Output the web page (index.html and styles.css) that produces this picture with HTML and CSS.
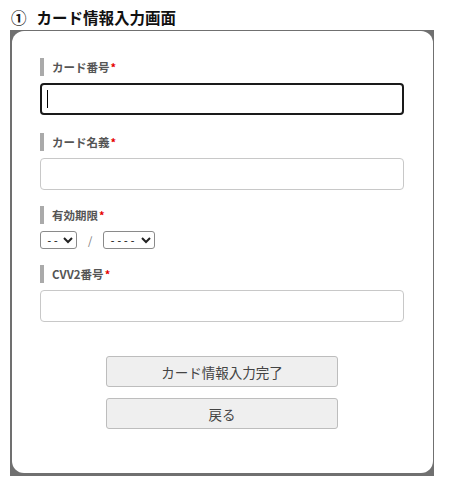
FILE: index.html
```html
<!DOCTYPE html>
<html lang="ja">
<head>
<meta charset="utf-8">
<title>カード情報入力画面</title>
<link rel="stylesheet" href="styles.css">
</head>
<body>
<div class="page">
  <h1 class="title"><span class="num">①</span>カード情報入力画面</h1>
  <div class="card-frame">
    <div class="card">
      <div class="fields">
        <div class="field field-first">
          <div class="label">カード番号<span class="req">*</span></div>
          <div class="textbox is-focused"><span class="caret"></span></div>
        </div>
        <div class="field">
          <div class="label">カード名義<span class="req">*</span></div>
          <input class="textbox" type="text">
        </div>
        <div class="field">
          <div class="label">有効期限<span class="req">*</span></div>
          <div class="expiry">
            <select class="sel sel-month"><option>--</option></select>
            <span class="slash">/</span>
            <select class="sel sel-year"><option>----</option></select>
          </div>
        </div>
        <div class="field">
          <div class="label">CVV2番号<span class="req">*</span></div>
          <input class="textbox" type="text">
        </div>
      </div>
      <div class="actions">
        <button class="btn" type="button">カード情報入力完了</button>
        <button class="btn" type="button">戻る</button>
      </div>
    </div>
  </div>
</div>
</body>
</html>
```
FILE: styles.css
```css
* { box-sizing: border-box; }
html, body { margin: 0; padding: 0; background: #fff; }
body {
  font-family: "Noto Sans CJK JP", "Noto Sans", sans-serif;
  color: #333;
}
.page {
  padding: 7px 0 0 10px;
  width: 434px;
}
.title {
  margin: 0 0 3px 1px;
  font-size: 15.5px;
  line-height: 20px;
  font-weight: bold;
  color: #111;
  display: flex;
  align-items: center;
}
.num {
  margin-right: 10px;
}
.card-frame {
  width: 424px;
  background: #707070;
  padding: 1px 1px 3px 2px;
}
.card {
  background: #fff;
  border-radius: 12px;
  padding: 27px 29px 44px 28px;
  display: flex;
  flex-direction: column;
}
.fields {
  display: flex;
  flex-direction: column;
  gap: 16px;
}
.field {
  display: flex;
  flex-direction: column;
  gap: 7px;
}
.field-first {
  margin-bottom: 2px;
}
.label {
  height: 18px;
  line-height: 18px;
  border-left: 4px solid #aaa;
  padding-left: 8px;
  font-size: 11.5px;
  font-weight: bold;
  color: #555;
}
.req {
  color: #e60000;
  font-size: 11px;
  margin-left: 1px;
}
.textbox {
  display: flex;
  align-items: center;
  width: 364px;
  height: 32px;
  border: 1px solid #c8c8c8;
  border-radius: 4px;
  background: #fff;
  padding: 0 5px;
  font: inherit;
  outline: none;
}
.textbox.is-focused {
  border: 2px solid #1a1a1a;
}
.caret {
  display: block;
  width: 1px;
  height: 18px;
  background: #000;
}
.expiry {
  display: flex;
  align-items: center;
  height: 18px;
}
.sel {
  height: 18px;
  font-family: "DejaVu Sans Mono", monospace;
  font-size: 11px;
  color: #222;
  border: 1px solid #8a8a8a;
  border-radius: 3px;
  background: #fff;
  padding: 0 1px;
}
.sel-month { width: 37px; }
.sel-year { width: 52px; }
.slash {
  margin: 0 11px 0 11px;
  font-size: 11px;
  color: #777;
}
.actions {
  margin-top: 34px;
  display: flex;
  flex-direction: column;
  align-items: center;
  gap: 11px;
}
.btn {
  width: 232px;
  height: 31px;
  background: #efefef;
  border: 1px solid #bdbdbd;
  border-radius: 3px;
  font-family: "Noto Sans CJK JP", "Noto Sans", sans-serif;
  font-size: 13.5px;
  color: #444;
  padding: 0;
}
```
